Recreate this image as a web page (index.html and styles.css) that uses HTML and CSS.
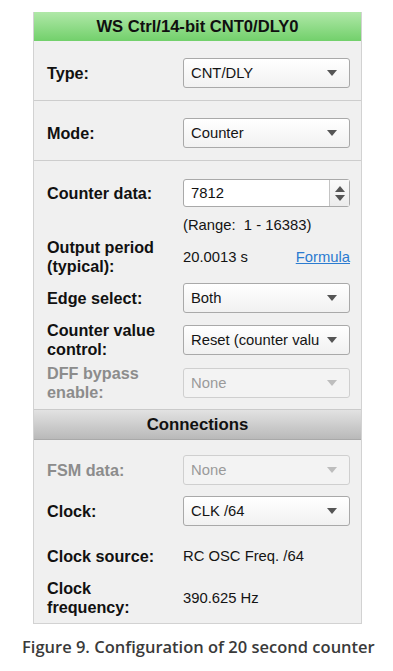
FILE: index.html
```html
<!DOCTYPE html>
<html>

<head>
    <title>WS Ctrl/14-bit CNT0/DLY0</title>
    <link rel="stylesheet" href="styles.css">
</head>

<body>
    <div class="panel">
        <div class="panel-title">WS Ctrl/14-bit CNT0/DLY0</div>

        <div class="section section-top">
            <div class="row">
                <div class="label">Type:</div>
                <div class="select"><span>CNT/DLY</span><i class="arrow"></i></div>
            </div>
        </div>

        <div class="section section-top">
            <div class="row">
                <div class="label">Mode:</div>
                <div class="select"><span>Counter</span><i class="arrow"></i></div>
            </div>
        </div>

        <div class="section section-props">
            <div class="row row-counter">
                <div class="label">Counter data:</div>
                <div class="spin">
                    <span>7812</span>
                    <div class="spin-buttons">
                        <i class="up"></i>
                        <i class="down"></i>
                    </div>
                </div>
            </div>
            <div class="row row-range">
                <div></div>
                <div class="value">(Range:&nbsp; 1 - 16383)</div>
            </div>
            <div class="row row-period">
                <div class="label">Output period<br>(typical):</div>
                <div class="value period">
                    <span>20.0013 s</span>
                    <a href="#" class="link">Formula</a>
                </div>
            </div>
            <div class="row row-edge">
                <div class="label">Edge select:</div>
                <div class="select"><span>Both</span><i class="arrow"></i></div>
            </div>
            <div class="row row-cv">
                <div class="label">Counter value<br>control:</div>
                <div class="select"><span>Reset (counter valu</span><i class="arrow"></i></div>
            </div>
            <div class="row row-dff">
                <div class="label disabled">DFF bypass<br>enable:</div>
                <div class="select disabled"><span>None</span><i class="arrow"></i></div>
            </div>
        </div>

        <div class="panel-subtitle">Connections</div>

        <div class="section section-conn">
            <div class="row row-fsm">
                <div class="label disabled">FSM data:</div>
                <div class="select disabled"><span>None</span><i class="arrow"></i></div>
            </div>
            <div class="row row-clock">
                <div class="label">Clock:</div>
                <div class="select"><span>CLK /64</span><i class="arrow"></i></div>
            </div>
            <div class="row row-source">
                <div class="label">Clock source:</div>
                <div class="value">RC OSC Freq. /64</div>
            </div>
            <div class="row row-freq">
                <div class="label">Clock<br>frequency:</div>
                <div class="value">390.625 Hz</div>
            </div>
        </div>
    </div>

    <p class="caption">Figure 9. Configuration of 20 second counter</p>
</body>

</html>
```

FILE: styles.css
```css
* {
    box-sizing: border-box;
}

body {
    margin: 0;
    padding: 12px 0 0 33px;
    background-color: #ffffff;
    font-family: "Liberation Sans", Arial, sans-serif;
    color: #111;
}

.panel {
    width: 329px;
    background-color: #f0f0f0;
    border: 1px solid #d2d2d2;
    border-top: none;
}

.panel-title {
    height: 29px;
    line-height: 29px;
    text-align: center;
    font-size: 16.6px;
    font-weight: bold;
    color: #101010;
    background: linear-gradient(to bottom, #b0e8a8, #72d06b);
}

.section {
    padding: 0 11px 0 13px;
}

.section-top {
    padding-top: 17px;
    padding-bottom: 12px;
    border-bottom: 1px solid #cdcdcd;
}

.section-props {
    padding-top: 18px;
    padding-bottom: 7px;
}

.section-conn {
    padding-top: 15px;
    padding-bottom: 6px;
}

.row {
    display: grid;
    grid-template-columns: 136px 1fr;
    align-items: center;
}

.label {
    font-size: 16.2px;
    font-weight: bold;
    line-height: 19px;
}

.disabled {
    color: #8c8c8c;
}

.value {
    font-size: 14.8px;
    line-height: 19px;
    color: #141414;
}

.select {
    height: 30px;
    display: flex;
    align-items: center;
    justify-content: space-between;
    padding: 0 12px 0 7px;
    border: 1px solid #a9a9a9;
    border-radius: 3px;
    background: linear-gradient(to bottom, #ffffff, #f1f1f1);
    font-size: 14.8px;
    color: #141414;
    white-space: nowrap;
    overflow: hidden;
}

.select.disabled {
    border-color: #cfcfcf;
    background: #f3f3f3;
    color: #9a9a9a;
}

.arrow {
    width: 0;
    height: 0;
    border-left: 5px solid transparent;
    border-right: 5px solid transparent;
    border-top: 6px solid #555;
    flex-shrink: 0;
    margin-left: 6px;
}

.select.disabled .arrow {
    border-top-color: #bdbdbd;
}

.spin {
    height: 28px;
    display: flex;
    align-items: stretch;
    justify-content: space-between;
    border: 1px solid #a9a9a9;
    border-radius: 3px;
    background: #ffffff;
    font-size: 14.8px;
}

.spin span {
    align-self: center;
    padding-left: 7px;
}

.spin-buttons {
    width: 20px;
    border-left: 1px solid #c4c4c4;
    display: flex;
    flex-direction: column;
    align-items: center;
    justify-content: center;
    gap: 3px;
    background: linear-gradient(to bottom, #fafafa, #ececec);
}

.spin-buttons .up {
    border-left: 5px solid transparent;
    border-right: 5px solid transparent;
    border-bottom: 6px solid #555;
}

.spin-buttons .down {
    border-left: 5px solid transparent;
    border-right: 5px solid transparent;
    border-top: 6px solid #555;
}

.row-range {
    margin-top: 9px;
}

.row-period {
    margin-top: 3px;
}

.period {
    display: flex;
    justify-content: space-between;
}

.link {
    color: #2b7bd0;
    text-decoration: underline;
}

.row-edge {
    margin-top: 7px;
}

.row-cv {
    margin-top: 8px;
}

.row-dff {
    margin-top: 5px;
}

.panel-subtitle {
    height: 31px;
    line-height: 30px;
    text-align: center;
    font-size: 16.8px;
    font-weight: bold;
    color: #111;
    background: linear-gradient(to bottom, #e2e2e2, #b9b9b9);
    border-top: 1px solid #cacaca;
    border-bottom: 1px solid #a9a9a9;
}

.row-clock {
    margin-top: 11px;
}

.row-source {
    margin-top: 21px;
}

.row-freq {
    margin-top: 13px;
}

.caption {
    margin: 11px 0 0 -11px;
    font-family: "Open Sans", sans-serif;
    font-weight: 600;
    font-size: 16.5px;
    color: #3a3a3a;
}
```
